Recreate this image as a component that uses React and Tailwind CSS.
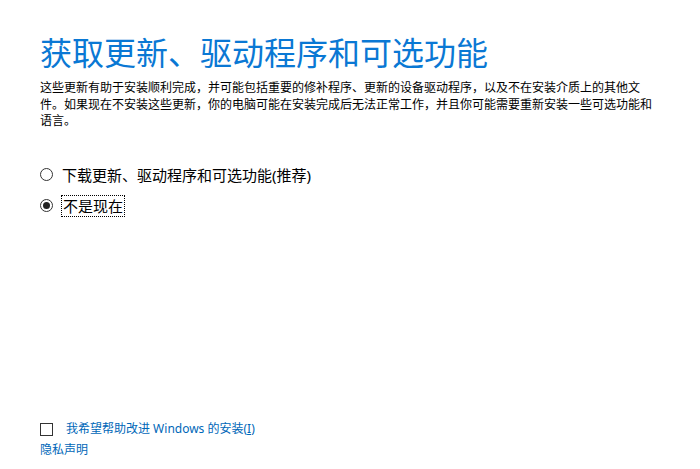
import React from "react";

const font = { fontFamily: '"Noto Sans", "Noto Sans CJK SC", sans-serif' };

function Radio({ checked }) {
  return (
    <span className="flex h-[13px] w-[13px] shrink-0 items-center justify-center rounded-full border border-[#333333] bg-white">
      {checked && <span className="h-[7px] w-[7px] rounded-full bg-[#222222]" />}
    </span>
  );
}

export default function App() {
  return (
    <div
      className="flex h-[469px] w-[700px] flex-col bg-white pl-[40px] pb-[10px] text-black"
      style={font}
    >
      <h1 className="pt-[33px] text-[32px] leading-[40px] font-normal text-[#0a78d4] whitespace-nowrap">
        获取更新、驱动程序和可选功能
      </h1>
      <p className="mt-[7px] w-[640px] text-[12px] leading-[16.5px] text-black">
        这些更新有助于安装顺利完成，并可能包括重要的修补程序、更新的设备驱动程序，以及不在安装介质上的其他文
        <br />
        件。如果现在不安装这些更新，你的电脑可能在安装完成后无法正常工作，并且你可能需要重新安装一些可选功能和
        <br />
        语言。
      </p>

      <div className="mt-[34px] flex flex-col gap-[9px]">
        <div className="flex h-[22px] items-center gap-[9px]">
          <Radio checked={false} />
          <span className="text-[15px] leading-[20px] whitespace-nowrap">
            下载更新、驱动程序和可选功能(推荐)
          </span>
        </div>
        <div className="flex h-[22px] items-center gap-[8px]">
          <Radio checked />
          <span className="flex h-[22px] items-center border border-dotted border-black px-[1px] text-[15px] leading-[20px] whitespace-nowrap">
            不是现在
          </span>
        </div>
      </div>

      <div className="mt-auto flex flex-col">
        <div className="flex h-[18px] items-center gap-[13px]">
          <span className="h-[13px] w-[13px] shrink-0 border-[1.5px] border-[#333333] bg-white" />
          <span className="text-[12px] leading-[18px] text-[#0067b8] whitespace-nowrap">
            我希望帮助改进 Windows 的安装(<span className="underline">I</span>)
          </span>
        </div>
        <div className="mt-[3px] h-[18px] text-[12px] leading-[18px] text-[#0067b8]">
          隐私声明
        </div>
      </div>
    </div>
  );
}
